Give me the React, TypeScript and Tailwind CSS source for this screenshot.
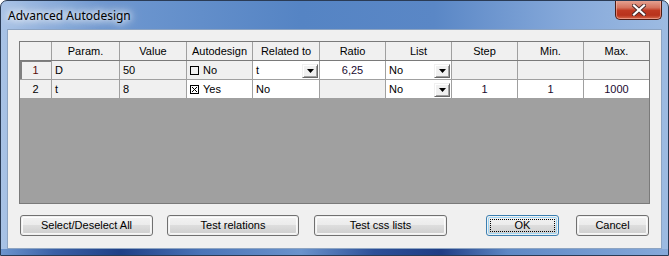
import React from "react";

type Cell = {
  text?: string;
  white?: boolean;
  align?: "left" | "center";
  drop?: boolean;
  check?: "on" | "off";
};

const cols: { name: string; w: string }[] = [
  { name: "Param.", w: "w-[68px]" },
  { name: "Value", w: "w-[67px]" },
  { name: "Autodesign", w: "w-[66px]" },
  { name: "Related to", w: "w-[67px]" },
  { name: "Ratio", w: "w-[66px]" },
  { name: "List", w: "w-[66px]" },
  { name: "Step", w: "w-[66px]" },
  { name: "Min.", w: "w-[66px]" },
  { name: "Max.", w: "w-[65px]" },
];

const rows: Cell[][] = [
  [
    { text: "D" },
    { text: "50" },
    { text: "No", check: "off" },
    { text: "t", white: true, drop: true },
    { text: "6,25", white: true, align: "center" },
    { text: "No", white: true, drop: true },
    {},
    {},
    {},
  ],
  [
    { text: "t" },
    { text: "8" },
    { text: "Yes", check: "on", white: true },
    { text: "No", white: true },
    {},
    { text: "No", white: true, drop: true },
    { text: "1", white: true, align: "center" },
    { text: "1", white: true, align: "center" },
    { text: "1000", white: true, align: "center" },
  ],
];

function DropBtn() {
  return (
    <div className="w-[16px] h-[14px] self-end mb-[1px] mr-[1px] shrink-0 bg-[#f0f0f0] border-t border-l border-t-[#f0f0f0] border-l-[#f0f0f0] border-r border-b border-r-[#696969] border-b-[#696969] shadow-[inset_1px_1px_0_#ffffff,inset_-1px_-1px_0_#a0a0a0] flex items-center justify-center">
      <svg width="7" height="4" viewBox="0 0 7 4">
        <path d="M0 0H7L3.5 4Z" fill="#000" />
      </svg>
    </div>
  );
}

function CheckBox({ on }: { on: boolean }) {
  return (
    <svg width="9" height="9" viewBox="0 0 9 9" className="shrink-0">
      <rect x="0.5" y="0.5" width="8" height="8" fill="none" stroke="#000" />
      {on && <path d="M2 2L7 7M7 2L2 7" stroke="#000" strokeWidth="1" />}
    </svg>
  );
}

function WinButton({
  label,
  w,
  focus,
  className = "",
}: {
  label: string;
  w: string;
  focus?: boolean;
  className?: string;
}) {
  return (
    <div
      className={`${w} h-[21px] rounded-[3px] border ${
        focus ? "border-[#3c7fb1]" : "border-[#707070]"
      } p-[1px] ${className}`}
    >
      <div
        className={`h-full w-full rounded-[2px] flex items-center justify-center bg-[linear-gradient(#f2f2f2_0%,#ebebeb_50%,#dddddd_50%,#cfcfcf_100%)] ${
          focus
            ? "shadow-[inset_0_0_0_1px_#9fd6f5]"
            : "shadow-[inset_0_0_0_1px_rgba(255,255,255,0.8)]"
        }`}
      >
        <div
          className={`flex items-center justify-center ${
            focus ? "border border-dotted border-black w-[calc(100%-4px)] h-[calc(100%-4px)]" : ""
          }`}
        >
          <span className="text-[11px] leading-none text-black">{label}</span>
        </div>
      </div>
    </div>
  );
}

export default function App() {
  return (
    <div
      className="w-[669px] h-[256px] overflow-hidden flex flex-col rounded-t-[7px] border border-[#2a3b55] bg-[linear-gradient(90deg,#a9c3e6_0%,#6f98d0_15%,#5584c4_45%,#5a87c6_65%,#86a9da_85%,#9dbbe2_100%)]"
      style={{ fontFamily: '"Liberation Sans", Arial, sans-serif' }}
    >
      {/* Title bar */}
      <div className="h-[28px] flex items-start justify-between pl-[7px] pr-[6px] shrink-0">
        <div
          className="mt-[7px] text-[12px] leading-[15px] text-black [text-shadow:0_0_6px_#ffffff,0_0_10px_#ffffff,0_0_14px_#ffffff]"
          style={{ fontFamily: '"Noto Sans", "Open Sans", sans-serif' }}
        >
          Advanced Autodesign
        </div>
        <div className="w-[47px] h-[20px] -mt-[1px] rounded-b-[5px] border border-t-0 border-[#4d1c14] bg-[linear-gradient(#e8a898_0%,#d5735e_40%,#c03a22_55%,#b8321c_80%,#d66a4c_100%)] shadow-[inset_0_0_0_1px_rgba(255,200,190,0.5)] flex items-center justify-center">
          <svg width="14" height="12" viewBox="0 0 14 12">
            <path
              d="M2 1.5L12 10.5M12 1.5L2 10.5"
              stroke="#4a2a2a"
              strokeWidth="4"
              strokeLinecap="square"
            />
            <path
              d="M2 1.5L12 10.5M12 1.5L2 10.5"
              stroke="#ffffff"
              strokeWidth="2.2"
              strokeLinecap="square"
            />
          </svg>
        </div>
      </div>

      {/* Client area */}
      <div className="mx-[6px] h-[220px] border border-[#8da4c2] bg-[#f0f0f0] shrink-0 flex flex-col">
        <div className="pl-[11px] pt-[11px]">
          <div className="w-[631px] h-[163px] border border-[#7a7a7a] bg-[#a0a0a0] flex flex-col text-[11px] text-black">
            {/* Header */}
            <div className="flex h-[19px] border-b border-[#7a7a7a] bg-[#f0f0f0]">
              <div className="w-[32px] border-r border-[#a0a0a0]" />
              {cols.map((c, i) => (
                <div
                  key={c.name}
                  className={`${c.w} ${i < cols.length - 1 ? "border-r border-[#a0a0a0]" : ""} flex items-center justify-center`}
                >
                  {c.name}
                </div>
              ))}
            </div>
            {rows.map((r, ri) => (
              <div key={ri} className="flex h-[19px] border-b border-[#a0a0a0]">
                <div
                  className={`w-[32px] border-r border-[#a0a0a0] bg-[#f0f0f0] flex items-center justify-center ${
                    ri === 0 ? "shadow-[inset_2px_1px_0_#808080] text-[#5a0a0a]" : ""
                  }`}
                >
                  {ri + 1}
                </div>
                {r.map((c, ci) => (
                  <div
                    key={ci}
                    className={`${cols[ci].w} ${ci < cols.length - 1 ? "border-r border-[#a0a0a0]" : ""} ${
                      c.white ? "bg-white" : "bg-[#f0f0f0]"
                    } flex items-center ${c.align === "center" ? "justify-center" : "pl-[3px]"} ${
                      c.align === "center" ? "text-[#1a0a30]" : ""
                    }`}
                  >
                    {c.check && (
                      <div className="flex items-center gap-[4px]">
                        <CheckBox on={c.check === "on"} />
                        <span>{c.text}</span>
                      </div>
                    )}
                    {!c.check && <span className={c.drop ? "flex-1" : ""}>{c.text}</span>}
                    {c.drop && <DropBtn />}
                  </div>
                ))}
              </div>
            ))}
          </div>
        </div>
        <div className="flex pl-[12px] pt-[11px]">
          <WinButton label="Select/Deselect All" w="w-[133px]" />
          <WinButton label="Test relations" w="w-[132px]" className="ml-[14px]" />
          <WinButton label="Test css lists" w="w-[133px]" className="ml-[15px]" />
          <WinButton label="OK" w="w-[73px]" focus className="ml-[39px]" />
          <WinButton label="Cancel" w="w-[73px]" className="ml-[17px]" />
        </div>
      </div>
      <div className="flex-1 bg-[linear-gradient(90deg,#6c95ce_0%,#3a60a6_8%,#1f3f86_18%,#4a74b8_30%,#6a93cc_45%,#2c4f98_56%,#1f3d85_66%,#5e88c5_76%,#86a9da_100%)]" />
    </div>
  );
}
